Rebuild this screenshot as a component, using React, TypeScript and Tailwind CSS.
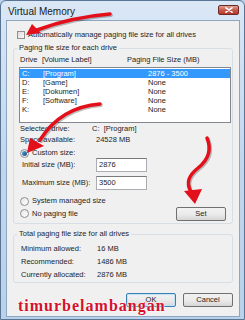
const drives = [
  { letter: 'C:', label: '[Program]', size: '2876 - 3500', selected: true },
  { letter: 'D:', label: '[Game]', size: 'None' },
  { letter: 'E:', label: '[Dokumen]', size: 'None' },
  { letter: 'F:', label: '[Software]', size: 'None' },
  { letter: 'K:', label: '', size: 'None' },
];

function Radio({ checked }: { checked?: boolean }) {
  return (
    <span className="w-[9px] h-[9px] rounded-full border border-[#8f8f8f] bg-gradient-to-br from-[#e6e6e6] to-white flex items-center justify-center shrink-0">
      {checked && <span className="w-[5px] h-[5px] rounded-full bg-gradient-to-br from-[#5ea3d8] to-[#154b7d]" />}
    </span>
  );
}

function Button({ label, primary }: { label: string; primary?: boolean }) {
  return (
    <div
      className={`w-[50px] h-[14px] rounded-[2px] border flex items-center justify-center bg-gradient-to-b from-[#f2f2f2] via-[#ebebeb] to-[#d6d6d6] text-[#1e1e1e] ${
        primary ? 'border-[#3c7fb1] shadow-[inset_0_0_0_1px_#bfe3f8]' : 'border-[#707070]'
      }`}
    >
      {label}
    </div>
  );
}

function GroupBox({ title, children, className }: { title: string; children: React.ReactNode; className?: string }) {
  return (
    <fieldset className={`border border-[#d5dfe5] rounded-[3px] pl-[5px] pr-[1px] ${className ?? ''}`}>
      <legend className="px-[2px] -ml-[2px] leading-[10px] text-[#1e1e1e]">{title}</legend>
      {children}
    </fieldset>
  );
}

export default function App() {
  return (
    <div className="relative w-[245px] h-[320px] overflow-hidden bg-[#b9d1ea] font-['Liberation_Sans',Arial,sans-serif] text-[7.5px] text-[#1e1e1e]">
      <div className="w-full h-full border border-[#5a7594] rounded-t-[6px] bg-gradient-to-b from-[#dae7f5] via-[#c2d7ee] to-[#b9d1ea] flex flex-col">
        {/* title bar */}
        <div className="h-[19px] flex items-start justify-between pl-[7px] pr-[5px] pt-[6px]">
          <span className="text-[10px] leading-[10px] text-[#1a1a1a]">Virtual Memory</span>
          <div className="w-[21px] h-[10px] -mt-[2px] rounded-[2px] border border-[#6d2a27] bg-gradient-to-b from-[#e2a093] via-[#c75a4c] to-[#b8362a] flex items-center justify-center">
            <svg width="8" height="6" viewBox="0 0 8 6">
              <path d="M1 0.8 L7 5.2 M7 0.8 L1 5.2" stroke="white" strokeWidth="1.6" strokeLinecap="round" />
            </svg>
          </div>
        </div>

        {/* client area */}
        <div className="flex-1 ml-[5px] mr-[4px] mb-[2px] border border-[#8ea6c0] bg-[#f0f0f0] px-[6px] flex flex-col">
          <div className="mt-[9px] h-[9px] flex items-center gap-[3px] pl-[4px]">
            <span className="w-[8px] h-[8px] border border-[#8f8f8f] bg-gradient-to-br from-[#dcdcdc] to-[#fafafa]" />
            <span>Automatically manage paging file size for all drives</span>
          </div>

          <GroupBox title="Paging file size for each drive" className="mt-[4px] h-[181px]">
            <div className="h-[12px] flex items-center pl-[1px] mt-[1px]">
              <span className="w-[22px]">Drive</span>
              <span className="w-[85px]">[Volume Label]</span>
              <span>Paging File Size (MB)</span>
            </div>
            <div className="mt-[1px] h-[56px] border border-[#828790] bg-white pt-[1px]">
              {drives.map((d) => (
                <div
                  key={d.letter}
                  className={`h-[9px] flex items-center pl-[2px] ${d.selected ? 'bg-[#3399ff] text-white' : ''}`}
                >
                  <span className="w-[21px]">{d.letter}</span>
                  <span className="w-[105px]">{d.label}</span>
                  <span>{d.size}</span>
                </div>
              ))}
            </div>
            <div className="h-[11px] flex items-center pl-[1px]">
              <span className="w-[72px]">Selected drive:</span>
              <span>C:&nbsp;&nbsp;[Program]</span>
            </div>
            <div className="h-[11px] flex items-center pl-[1px]">
              <span className="w-[76px]">Space available:</span>
              <span>24528 MB</span>
            </div>
            <div className="mt-[3px] h-[10px] flex items-center gap-[3px] pl-[1px]">
              <Radio checked />
              <span>Custom size:</span>
            </div>
            <div className="h-[14px] flex items-center pl-[3px]">
              <span className="w-[74px]">Initial size (MB):</span>
              <div className="w-[51px] h-[14px] border border-[#abadb3] border-t-[#7a7a7a] bg-white flex items-center pl-[2px]">2876</div>
            </div>
            <div className="mt-[4px] h-[14px] flex items-center pl-[3px]">
              <span className="w-[74px]">Maximum size (MB):</span>
              <div className="w-[51px] h-[14px] border border-[#abadb3] border-t-[#7a7a7a] bg-white flex items-center pl-[2px]">3500</div>
            </div>
            <div className="mt-[5px] h-[12px] flex items-center gap-[3px] pl-[1px]">
              <Radio />
              <span>System managed size</span>
            </div>
            <div className="h-[13px] flex items-center pl-[1px] pr-[5px]">
              <Radio />
              <span className="ml-[3px] flex-1">No paging file</span>
              <Button label="Set" />
            </div>
          </GroupBox>

          <GroupBox title="Total paging file size for all drives" className="mt-[5px] h-[54px]">
            <div className="mt-[3px] h-[13px] flex items-center pl-[2px]">
              <span className="w-[76px]">Minimum allowed:</span>
              <span>16 MB</span>
            </div>
            <div className="h-[13px] flex items-center pl-[2px]">
              <span className="w-[76px]">Recommended:</span>
              <span>1486 MB</span>
            </div>
            <div className="h-[13px] flex items-center pl-[2px]">
              <span className="w-[76px]">Currently allocated:</span>
              <span>2876 MB</span>
            </div>
          </GroupBox>

          <div className="mt-[10px] flex justify-end gap-[7px] pr-[0px]">
            <Button label="OK" primary />
            <Button label="Cancel" />
          </div>
        </div>
      </div>

      {/* annotation arrows */}
      <svg className="absolute inset-0 pointer-events-none" width="245" height="320" viewBox="0 0 245 320">
        <g fill="none" stroke="rgba(0,0,0,0.25)" strokeWidth="3.5" strokeLinecap="round" transform="translate(1.2 1.2)">
          <path d="M110 14 Q 72 17 37 30" />
          <path d="M100 104 C 75 106 55 116 40 140" />
          <path d="M207 138 C 212 150 208 160 198 168 C 188 176 186 183 191 192" />
        </g>
        <g fill="none" stroke="#e3101b" strokeWidth="3.5" strokeLinecap="round">
          <path d="M110 14 Q 72 17 37 30" />
          <path d="M100 104 C 75 106 55 116 40 140" />
          <path d="M207 138 C 212 150 208 160 198 168 C 188 176 186 183 191 192" />
        </g>
        <g fill="#e3101b">
          <polygon points="26,35 32,24 41,33" />
          <polygon points="27,153 30,138 44,146" />
          <polygon points="195,204 184,191 202,189" />
        </g>
      </svg>

      {/* watermark */}
      <span className="absolute left-[18px] top-[298px] font-['Liberation_Serif',serif] font-bold text-[16px] leading-[16px] tracking-[1px] text-[#d4112d] [text-shadow:0_0_2px_white,0_0_1px_white]">
        timurbelambangan
      </span>
    </div>
  );
}
